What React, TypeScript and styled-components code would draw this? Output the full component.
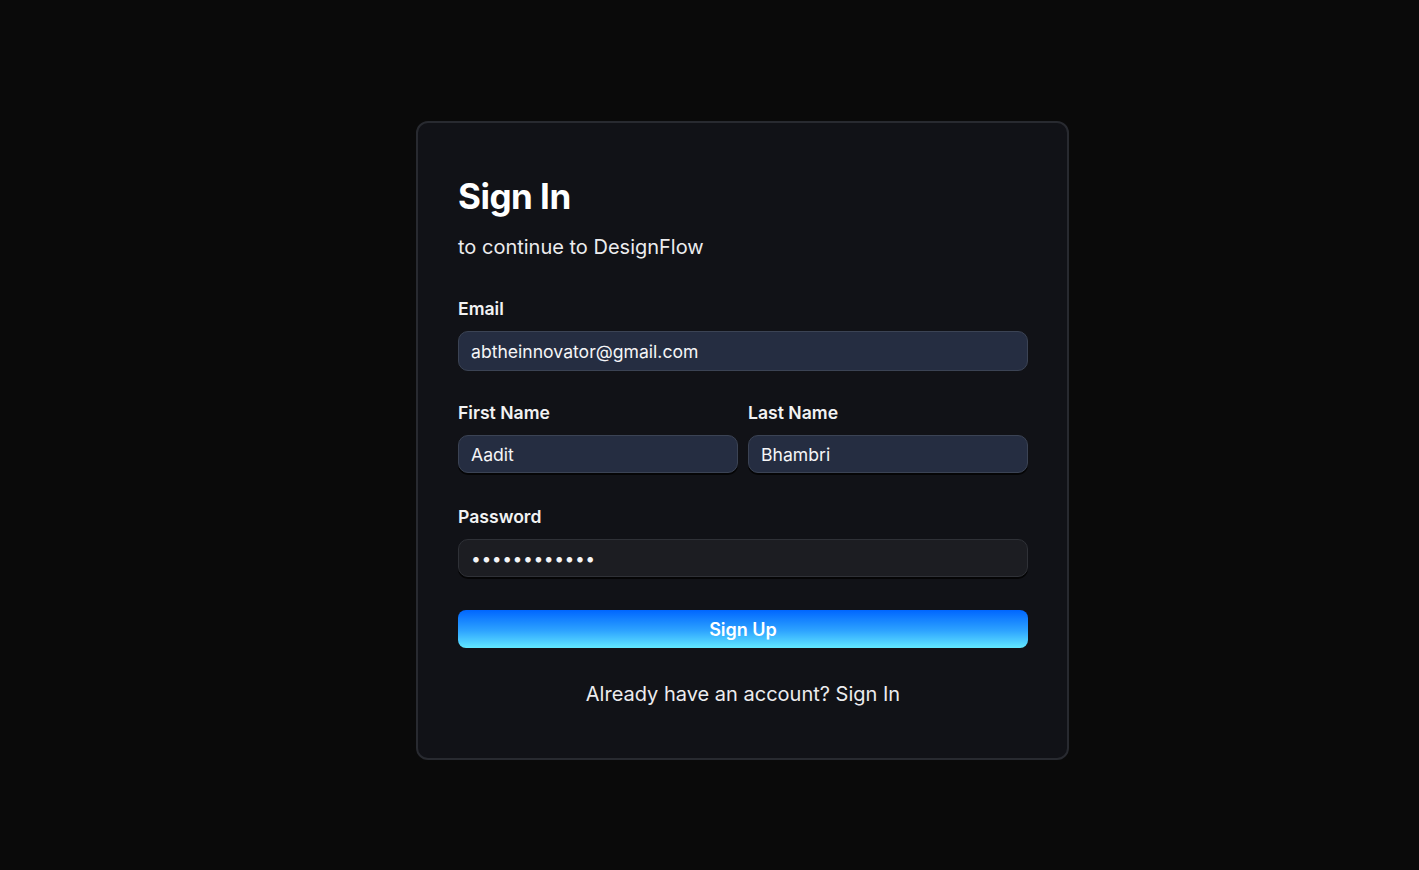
import React from "react";
import styled, { createGlobalStyle } from "styled-components";

const GlobalStyle = createGlobalStyle`
  html, body {
    margin: 0;
    padding: 0;
    background-color: #0a0a0a;
    font-family: Inter, "Noto Sans", "Liberation Sans", sans-serif;
  }
  * {
    box-sizing: border-box;
  }
`;

const Page = styled.div`
  width: 100vw;
  min-height: 100vh;
  display: flex;
  justify-content: center;
  padding: 121px 0 0 66px;
`;

const Card = styled.div`
  width: 653px;
  height: 639px;
  padding: 52px 39px 50px 40px;
  background-color: #111217;
  border: 2px solid #282a30;
  border-radius: 12px;
  color: #f4f4f5;
`;

const Title = styled.h1`
  margin: 0;
  font-size: 35px;
  line-height: 43px;
  font-weight: 700;
  color: #ffffff;
  letter-spacing: -0.5px;
`;

const Subtitle = styled.p`
  margin: 15px 0 0;
  font-size: 20px;
  line-height: 28px;
  color: #ececee;
`;

const Form = styled.form`
  margin-top: 36px;
  display: flex;
  flex-direction: column;
`;

const Field = styled.div<{ $gap?: number }>`
  display: flex;
  flex-direction: column;
  flex: 1;
  margin-top: ${(p) => p.$gap ?? 0}px;
`;

const Row = styled.div`
  display: flex;
  gap: 10px;
  margin-top: 30px;
`;

const Label = styled.label`
  font-size: 17.6px;
  line-height: 24px;
  font-weight: 600;
  color: #f2f2f3;
  margin-bottom: 10px;
`;

const Input = styled.input<{ $dark?: boolean; $tall?: boolean }>`
  width: 100%;
  height: ${(p) => (p.$tall ? 40 : 38)}px;
  padding: 0 12px;
  border-radius: 10px;
  border: 1px solid ${(p) => (p.$dark ? "#2f3137" : "#3b4354")};
  background-color: ${(p) => (p.$dark ? "#1c1d22" : "#252d41")};
  box-shadow: ${(p) => (p.$tall ? "none" : "0 2px 0 #050506")};
  color: #f5f5f7;
  font-family: inherit;
  font-size: 17.6px;
  outline: none;
  letter-spacing: ${(p) => (p.$dark ? "0.5px" : "0")};
`;

const Button = styled.button`
  margin-top: 33px;
  width: 100%;
  height: 38px;
  border: none;
  border-radius: 8px;
  background: linear-gradient(180deg, #0066ff 0%, #2ea4ff 55%, #62e8ff 100%);
  color: #ffffff;
  font-family: inherit;
  font-size: 18px;
  font-weight: 600;
  cursor: pointer;
`;

const Footer = styled.p`
  margin: 32px 0 0;
  text-align: center;
  font-size: 20px;
  line-height: 28px;
  color: #ececee;
`;

function App() {
  return (
    <>
      <GlobalStyle />
      <Page>
        <Card>
          <Title>Sign In</Title>
          <Subtitle>to continue to DesignFlow</Subtitle>
          <Form onSubmit={(e) => e.preventDefault()}>
            <Field>
              <Label>Email</Label>
              <Input $tall type="email" defaultValue="abtheinnovator@gmail.com" />
            </Field>
            <Row>
              <Field>
                <Label>First Name</Label>
                <Input type="text" defaultValue="Aadit" />
              </Field>
              <Field>
                <Label>Last Name</Label>
                <Input type="text" defaultValue="Bhambri" />
              </Field>
            </Row>
            <Field $gap={32}>
              <Label>Password</Label>
              <Input $dark type="password" defaultValue="aadit1234567" />
            </Field>
            <Button type="submit">Sign Up</Button>
          </Form>
          <Footer>Already have an account? Sign In</Footer>
        </Card>
      </Page>
    </>
  );
}

export default App;
